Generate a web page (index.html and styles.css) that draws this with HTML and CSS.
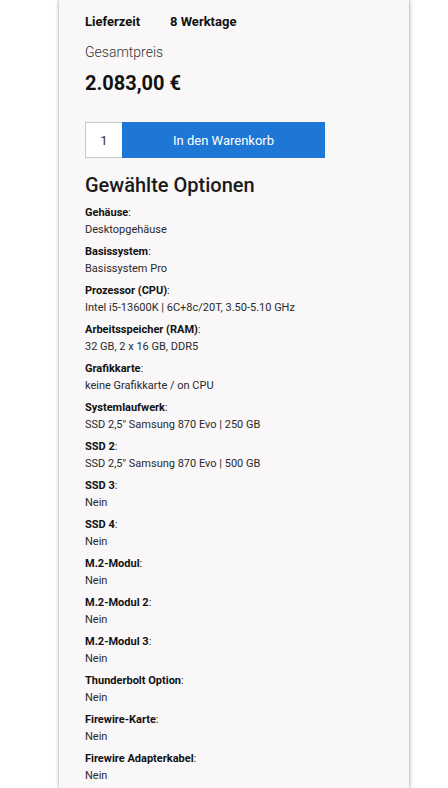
FILE: index.html
```html
<!DOCTYPE html>
<html lang="de">
<head>
<meta charset="utf-8">
<link rel="stylesheet" href="styles.css">
</head>
<body>
<div class="card">
  <div class="delivery"><span class="dl-label">Lieferzeit</span><span class="dl-value">8 Werktage</span></div>
  <div class="total-label">Gesamtpreis</div>
  <div class="price">2.083,00 €</div>
  <div class="buy">
    <div class="qty">1</div>
    <div class="cart-btn">In den Warenkorb</div>
  </div>
  <h2 class="opts-title">Gewählte Optionen</h2>
  <div class="opts">
    <div class="opt"><div class="opt-label"><b>Gehäuse</b>:</div><div class="opt-value">Desktopgehäuse</div></div>
    <div class="opt"><div class="opt-label"><b>Basissystem</b>:</div><div class="opt-value">Basissystem Pro</div></div>
    <div class="opt"><div class="opt-label"><b>Prozessor (CPU)</b>:</div><div class="opt-value">Intel i5-13600K | 6C+8c/20T, 3.50-5.10 GHz</div></div>
    <div class="opt"><div class="opt-label"><b>Arbeitsspeicher (RAM)</b>:</div><div class="opt-value">32 GB, 2 x 16 GB, DDR5</div></div>
    <div class="opt"><div class="opt-label"><b>Grafikkarte</b>:</div><div class="opt-value">keine Grafikkarte / on CPU</div></div>
    <div class="opt"><div class="opt-label"><b>Systemlaufwerk</b>:</div><div class="opt-value">SSD 2,5" Samsung 870 Evo | 250 GB</div></div>
    <div class="opt"><div class="opt-label"><b>SSD 2</b>:</div><div class="opt-value">SSD 2,5" Samsung 870 Evo | 500 GB</div></div>
    <div class="opt"><div class="opt-label"><b>SSD 3</b>:</div><div class="opt-value">Nein</div></div>
    <div class="opt"><div class="opt-label"><b>SSD 4</b>:</div><div class="opt-value">Nein</div></div>
    <div class="opt"><div class="opt-label"><b>M.2-Modul</b>:</div><div class="opt-value">Nein</div></div>
    <div class="opt"><div class="opt-label"><b>M.2-Modul 2</b>:</div><div class="opt-value">Nein</div></div>
    <div class="opt"><div class="opt-label"><b>M.2-Modul 3</b>:</div><div class="opt-value">Nein</div></div>
    <div class="opt"><div class="opt-label"><b>Thunderbolt Option</b>:</div><div class="opt-value">Nein</div></div>
    <div class="opt"><div class="opt-label"><b>Firewire-Karte</b>:</div><div class="opt-value">Nein</div></div>
    <div class="opt"><div class="opt-label"><b>Firewire Adapterkabel</b>:</div><div class="opt-value">Nein</div></div>
  </div>
</div>
</body>
</html>
```

FILE: styles.css
```css
html, body {
  margin: 0;
  padding: 0;
  background: #ffffff;
  height: 788px;
  overflow: hidden;
}
body {
  font-family: Roboto, "Liberation Sans", sans-serif;
  color: #222;
}
.card {
  margin-left: 59px;
  width: 350px;
  box-sizing: border-box;
  min-height: 788px;
  background: #f9f7f8;
  box-shadow: 0 0 3px rgba(0,0,0,0.35), 1px 0 6px rgba(0,0,0,0.12);
  padding: 13px 26px 0 26px;
}
.delivery {
  display: flex;
  font-size: 13px;
  font-weight: 700;
  line-height: 18px;
  color: #111;
}
.dl-label { width: 85px; }
.total-label {
  margin-top: 12px;
  font-size: 14px;
  font-weight: 300;
  line-height: 18px;
  color: #333;
}
.price {
  margin-top: 10px;
  font-size: 20px;
  font-weight: 700;
  line-height: 24px;
  color: #111;
}
.buy {
  display: flex;
  margin-top: 27px;
  height: 36px;
}
.qty {
  width: 37px;
  box-sizing: border-box;
  border: 1px solid #c8c8c8;
  border-right: none;
  background: #fff;
  display: flex;
  align-items: center;
  justify-content: center;
  font-size: 13px;
  color: #333;
}
.cart-btn {
  width: 203px;
  background: #1f77d5;
  color: #fff;
  display: flex;
  align-items: center;
  justify-content: center;
  font-size: 13px;
}
.opts-title {
  margin: 15px 0 7px 0;
  font-size: 20px;
  font-weight: 500;
  line-height: 24px;
  color: #1a1a1a;
}
.opt {
  margin-bottom: 5px;
}
.opt-label, .opt-value {
  font-size: 11px;
  line-height: 17px;
  color: #2a2a2a;
}
.opt-label b {
  font-weight: 700;
  color: #111;
}
```
